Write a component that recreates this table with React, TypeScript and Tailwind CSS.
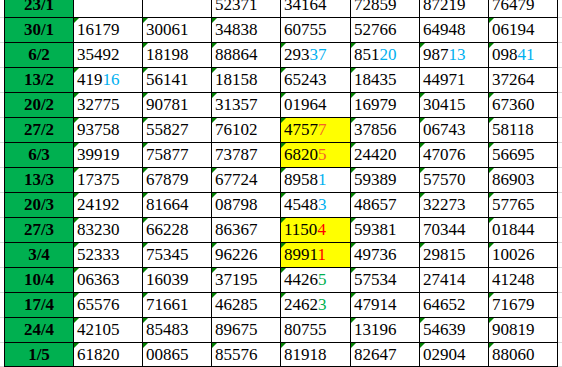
import React from "react";

type Cell = { v: string; n?: number; c?: string; y?: boolean; t?: boolean };

const B = "#00b0f0";
const O = "#f4622a";
const R = "#ff0000";
const G = "#00b050";

const raw: [string, string[], number[]][] = [
  ["23/1", ["", "", "52371", "34164", "72859", "87219", "76479"], [0, 0, 0, 0, 0, 0, 0]],
  ["30/1", ["16179", "30061", "34838", "60755", "52766", "64948", "06194"], [1, 1, 1, 0, 0, 0, 1]],
  ["6/2", ["35492", "18198", "88864", "29337", "85120", "98713", "09841"], [0, 1, 1, 1, 1, 1, 1]],
  ["13/2", ["41916", "56141", "18158", "65243", "18435", "44971", "37264"], [1, 1, 1, 1, 1, 0, 0]],
  ["20/2", ["32775", "90781", "31357", "01964", "16979", "30415", "67360"], [1, 1, 1, 1, 1, 1, 1]],
  ["27/2", ["93758", "55827", "76102", "47577", "37856", "06743", "58118"], [1, 1, 1, 1, 1, 1, 1]],
  ["6/3", ["39919", "75877", "73787", "68205", "24420", "47076", "56695"], [1, 1, 0, 1, 1, 1, 1]],
  ["13/3", ["17375", "67879", "67724", "89581", "59389", "57570", "86903"], [1, 1, 1, 1, 1, 1, 1]],
  ["20/3", ["24192", "81664", "08798", "45483", "48657", "32273", "57765"], [1, 1, 1, 1, 1, 1, 1]],
  ["27/3", ["83230", "66228", "86367", "11504", "59381", "70344", "01844"], [1, 1, 0, 1, 1, 0, 1]],
  ["3/4", ["52333", "75345", "96226", "89911", "49736", "29815", "10026"], [1, 1, 1, 1, 1, 1, 1]],
  ["10/4", ["06363", "16039", "37195", "44265", "57534", "27414", "41248"], [1, 1, 1, 1, 1, 0, 0]],
  ["17/4", ["65576", "71661", "46285", "24623", "47914", "64652", "71679"], [1, 1, 1, 1, 1, 0, 1]],
  ["24/4", ["42105", "85483", "89675", "80755", "13196", "54639", "90819"], [1, 1, 0, 0, 1, 1, 1]],
  ["1/5", ["61820", "00865", "85576", "81918", "82647", "02904", "88060"], [1, 1, 1, 1, 1, 1, 1]],
];

const special: Record<string, { n: number; c: string; y?: boolean }> = {
  "41916": { n: 2, c: B },
  "29337": { n: 2, c: B },
  "85120": { n: 2, c: B },
  "98713": { n: 2, c: B },
  "09841": { n: 2, c: B },
  "89581": { n: 1, c: B },
  "45483": { n: 1, c: B },
  "47577": { n: 1, c: O, y: true },
  "68205": { n: 1, c: O, y: true },
  "11504": { n: 1, c: R, y: true },
  "89911": { n: 1, c: R, y: true },
  "44265": { n: 1, c: G },
  "24623": { n: 1, c: G },
};

const widths = ["w-[69px]", "w-[69px]", "w-[69px]", "w-[70px]", "w-[69px]", "w-[69px]", "w-[69px]"];

function Tri() {
  return (
    <svg className="absolute left-0 top-0" width="6" height="6" viewBox="0 0 6 6">
      <polygon points="0,0 5,0 0,5" fill="#008000" />
    </svg>
  );
}

function DataCell({ v, t, w }: { v: string; t: boolean; w: string }) {
  const s = special[v];
  const body = s ? (
    <>
      {v.slice(0, v.length - s.n)}
      <span style={{ color: s.c }}>{v.slice(v.length - s.n)}</span>
    </>
  ) : (
    v
  );
  return (
    <div
      className={`relative ${w} shrink-0 border-r border-b border-black pl-[3px] text-[17px] leading-[24px] text-black ${
        s?.y ? "bg-[#ffff00]" : "bg-white"
      }`}
    >
      {t ? <Tri /> : null}
      {body}
    </div>
  );
}

export default function App() {
  return (
    <div
      className="w-[562px] h-[367px] overflow-hidden bg-white"
      style={{ fontFamily: '"Liberation Serif", "Times New Roman", serif' }}
    >
      <div className="flex flex-col mt-[-7px]">
        {raw.map(([d, vals, tris], i) => {
          const h = i === raw.length - 1 ? "h-[24px]" : "h-[25px]";
          return (
            <div key={d} className={`flex ${h}`}>
              <div className="w-[4px] shrink-0 border-b border-[#d9d9d9]" />
              <div className="w-[70px] shrink-0 border-l border-r border-b border-black bg-[#00b050] text-center text-[17px] font-bold leading-[24px] text-black">
                {d}
              </div>
              {vals.map((v, j) => (
                <DataCell key={j} v={v} t={tris[j] === 1} w={widths[j]} />
              ))}
              <div className="flex-1 border-b border-[#d9d9d9]" />
            </div>
          );
        })}
      </div>
    </div>
  );
}
